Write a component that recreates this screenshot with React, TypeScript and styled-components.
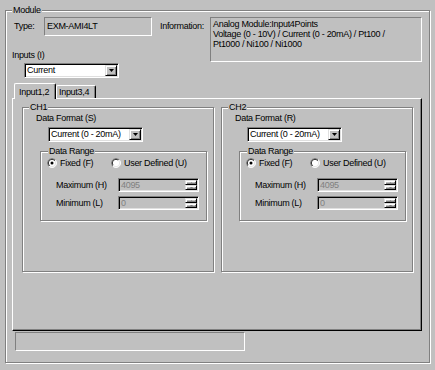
import React, { useId } from 'react';
import styled, { createGlobalStyle } from 'styled-components';

const GlobalStyle = createGlobalStyle`
  html, body { margin: 0; padding: 0; background: #c0c0c0; }
  body {
    font-family: "Liberation Sans", Arial, sans-serif;
    font-size: 9px;
    letter-spacing: -0.3px;
    color: #000;
  }
  * { box-sizing: border-box; }
`;

const Window = styled.div`
  width: 435px;
  height: 370px;
  padding: 10px 5px 0 5px;
  background: #c0c0c0;
  overflow: hidden;
`;

const Group = styled.div`
  position: relative;
  border: 1px solid #808080;
  box-shadow: inset 1px 1px 0 #fff, 1px 1px 0 #fff;
`;

const Caption = styled.span<{ $left: number }>`
  position: absolute;
  top: -6px;
  left: ${(p) => p.$left}px;
  padding: 0 1px;
  background: #c0c0c0;
  line-height: 10px;
  white-space: nowrap;
`;

const ModuleFrame = styled(Group)`
  padding: 6px 7px 11px 6px;
`;

const TopSection = styled.div`
  display: flex;
  align-items: flex-start;
`;

const LeftCol = styled.div`
  width: 148px;
  display: flex;
  flex-direction: column;
  align-items: flex-start;
`;

const TypeRow = styled.div`
  display: flex;
  padding-left: 2px;
`;

const FieldLabel = styled.span<{ $w: number }>`
  width: ${(p) => p.$w}px;
  line-height: 19px;
  white-space: nowrap;
`;

const StaticBox = styled.div<{ $h: number }>`
  height: ${(p) => p.$h}px;
  border: 1px solid;
  border-color: #808080 #fff #fff #808080;
  padding: 1px 2px;
  line-height: ${(p) => (p.$h === 19 ? 15 : 10)}px;
  white-space: nowrap;
`;

const TypeBox = styled(StaticBox)`
  width: 108px;
`;

const InfoBox = styled(StaticBox)`
  flex: 1;
`;

const PlainLabel = styled.div<{ $mt: number; $ml?: number }>`
  margin-top: ${(p) => p.$mt}px;
  margin-left: ${(p) => p.$ml ?? 0}px;
  line-height: 10px;
  white-space: nowrap;
`;

const ComboFrame = styled.div<{ $mt: number; $ml: number }>`
  margin-top: ${(p) => p.$mt}px;
  margin-left: ${(p) => p.$ml}px;
  width: 95px;
  height: 15px;
  display: flex;
  padding: 1px;
  background: #fff;
  border: 1px solid;
  border-color: #808080 #fff #fff #808080;
  box-shadow: inset 1px 1px 0 #000, inset -1px -1px 0 #dfdfdf;
`;

const ComboText = styled.div`
  flex: 1;
  padding-left: 1px;
  line-height: 11px;
  white-space: nowrap;
  overflow: hidden;
`;

const RaisedButton = styled.div`
  background: #c0c0c0;
  display: flex;
  align-items: center;
  justify-content: center;
  border: 1px solid;
  border-color: #dfdfdf #000 #000 #dfdfdf;
  box-shadow: inset 1px 1px 0 #fff, inset -1px -1px 0 #808080;
`;

const ComboButton = styled(RaisedButton)`
  width: 12px;
  height: 100%;
`;

const TabStrip = styled.div`
  display: flex;
  align-items: flex-end;
  height: 15px;
  margin-top: 5px;
  padding-left: 2px;
`;

const Tab = styled.div<{ $active?: boolean; $w: number }>`
  position: relative;
  z-index: ${(p) => (p.$active ? 1 : 0)};
  width: ${(p) => p.$w}px;
  height: ${(p) => (p.$active ? 16 : 13)}px;
  margin-bottom: ${(p) => (p.$active ? -1 : 0)}px;
  padding-left: ${(p) => (p.$active ? 4 : 2)}px;
  padding-top: ${(p) => (p.$active ? 3 : 1)}px;
  line-height: 10px;
  background: #c0c0c0;
  border-top: 1px solid #fff;
  border-left: 1px solid #fff;
  border-right: 1px solid #000;
  border-radius: 2px 2px 0 0;
  box-shadow: inset -1px 0 0 #808080;
  white-space: nowrap;
`;

const TabPanel = styled.div`
  height: 233px;
  border: 1px solid;
  border-color: #fff #000 #000 #fff;
  box-shadow: inset -1px -1px 0 #808080;
  padding: 8px 8px 0 9px;
  display: grid;
  grid-template-columns: 1fr 1fr;
  column-gap: 7px;
  align-items: start;
`;

const ChannelGroup = styled(Group)`
  height: 165px;
  padding: 5px 0 0 13px;
  display: flex;
  flex-direction: column;
  align-items: flex-start;
`;

const RangeGroup = styled(Group)`
  margin-top: 9px;
  margin-left: 4px;
  width: 167px;
  height: 70px;
  padding: 5px 0 0 6px;
`;

const RadioRow = styled.div`
  display: flex;
  height: 12px;
  align-items: center;
`;

const RadioItem = styled.div<{ $w?: number }>`
  display: flex;
  align-items: center;
  gap: 3px;
  width: ${(p) => (p.$w ? `${p.$w}px` : 'auto')};
  white-space: nowrap;
  line-height: 10px;
`;

const SpinRow = styled.div<{ $mt: number }>`
  display: flex;
  align-items: center;
  margin-top: ${(p) => p.$mt}px;
  margin-left: 9px;
`;

const SpinLabel = styled.span`
  width: 62px;
  line-height: 10px;
  white-space: nowrap;
`;

const SpinBox = styled.div`
  width: 81px;
  height: 14px;
  display: flex;
  padding: 1px;
  background: #c0c0c0;
  border: 1px solid;
  border-color: #808080 #fff #fff #808080;
  box-shadow: inset 1px 1px 0 #000, inset -1px -1px 0 #dfdfdf;
`;

const SpinText = styled.div`
  flex: 1;
  padding-left: 1px;
  line-height: 10px;
  color: #808080;
`;

const SpinButtons = styled.div`
  width: 12px;
  display: flex;
  flex-direction: column;
`;

const SpinHalf = styled(RaisedButton)`
  flex: 1;
`;

const StatusBox = styled.div`
  margin: 1px 0 0 3px;
  width: 230px;
  height: 19px;
  border: 1px solid;
  border-color: #808080 #fff #fff #808080;
`;

const DownArrow = () => (
  <svg width="5" height="3" viewBox="0 0 5 3">
    <path d="M0 0h5L2.5 3z" fill="#000" />
  </svg>
);

const TinyArrow = ({ up }: { up?: boolean }) => (
  <svg width="3" height="2" viewBox="0 0 3 2">
    <path d={up ? 'M0 2h3L1.5 0z' : 'M0 0h3L1.5 2z'} fill="#808080" />
  </svg>
);

const Radio = ({ checked }: { checked?: boolean }) => {
  const id = useId().replace(/:/g, '');
  return (
    <svg width="10" height="10" viewBox="0 0 12 12">
      <defs>
        <linearGradient id={`o${id}`} x1="0" y1="0" x2="1" y2="1">
          <stop offset="0.5" stopColor="#808080" />
          <stop offset="0.5" stopColor="#fff" />
        </linearGradient>
        <linearGradient id={`i${id}`} x1="0" y1="0" x2="1" y2="1">
          <stop offset="0.5" stopColor="#000" />
          <stop offset="0.5" stopColor="#dfdfdf" />
        </linearGradient>
      </defs>
      <circle cx="6" cy="6" r="5.5" fill="#fff" stroke={`url(#o${id})`} />
      <circle cx="6" cy="6" r="4.5" fill="#fff" stroke={`url(#i${id})`} />
      {checked && <circle cx="6" cy="6" r="1.8" fill="#000" />}
    </svg>
  );
};

const Combo = ({ value, mt, ml }: { value: string; mt: number; ml: number }) => (
  <ComboFrame $mt={mt} $ml={ml}>
    <ComboText>{value}</ComboText>
    <ComboButton>
      <DownArrow />
    </ComboButton>
  </ComboFrame>
);

const Spin = ({ label, value, mt }: { label: string; value: string; mt: number }) => (
  <SpinRow $mt={mt}>
    <SpinLabel>{label}</SpinLabel>
    <SpinBox>
      <SpinText>{value}</SpinText>
      <SpinButtons>
        <SpinHalf>
          <TinyArrow up />
        </SpinHalf>
        <SpinHalf>
          <TinyArrow />
        </SpinHalf>
      </SpinButtons>
    </SpinBox>
  </SpinRow>
);

const Channel = ({ name, key2 }: { name: string; key2: string }) => (
  <ChannelGroup>
    <Caption $left={6}>{name}</Caption>
    <PlainLabel $mt={0}>Data Format ({key2})</PlainLabel>
    <Combo value="Current (0 - 20mA)" mt={4} ml={12} />
    <RangeGroup>
      <Caption $left={7}>Data Range</Caption>
      <RadioRow>
        <RadioItem $w={64}>
          <Radio checked />
          <span>Fixed (F)</span>
        </RadioItem>
        <RadioItem>
          <Radio />
          <span>User Defined (U)</span>
        </RadioItem>
      </RadioRow>
      <Spin label="Maximum (H)" value="4095" mt={9} />
      <Spin label="Minimum (L)" value="0" mt={4} />
    </RangeGroup>
  </ChannelGroup>
);

export default function App() {
  return (
    <>
      <GlobalStyle />
      <Window>
        <ModuleFrame>
          <Caption $left={6}>Module</Caption>
          <TopSection>
            <LeftCol>
              <TypeRow>
                <FieldLabel $w={30}>Type:</FieldLabel>
                <TypeBox $h={19}>EXM-AMI4LT</TypeBox>
              </TypeRow>
              <PlainLabel $mt={14}>Inputs (I)</PlainLabel>
              <Combo value="Current" mt={3} ml={12} />
            </LeftCol>
            <FieldLabel $w={50}>Information:</FieldLabel>
            <InfoBox $h={45}>
              Analog Module:Input4Points
              <br />
              Voltage (0 - 10V) / Current (0 - 20mA) / Pt100 /
              <br />
              Pt1000 / Ni100 / Ni1000
            </InfoBox>
          </TopSection>
          <TabStrip>
            <Tab $active $w={42}>Input1,2</Tab>
            <Tab $w={40}>Input3,4</Tab>
          </TabStrip>
          <TabPanel>
            <Channel name="CH1" key2="S" />
            <Channel name="CH2" key2="R" />
          </TabPanel>
          <StatusBox />
        </ModuleFrame>
      </Window>
    </>
  );
}
